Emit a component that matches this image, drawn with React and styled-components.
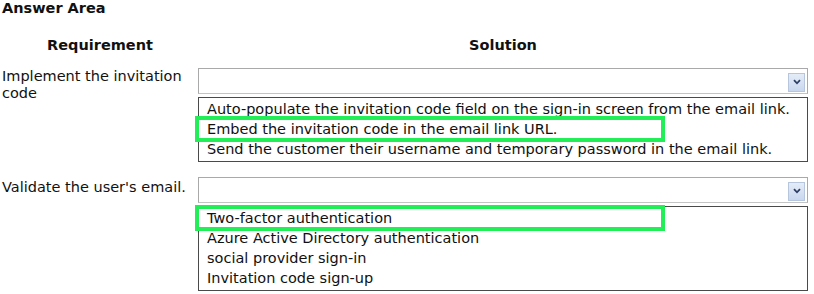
import React from "react";
import styled, { createGlobalStyle } from "styled-components";

const Global = createGlobalStyle`
  html, body { margin: 0; padding: 0; background: #fff; }
  body { font-family: "DejaVu Sans", Tahoma, Verdana, sans-serif; color: #111; }
`;

const Page = styled.div`
  width: 814px;
  height: 294px;
  padding: 0 0 0 2px;
  box-sizing: border-box;
  overflow: hidden;
`;

const Title = styled.div`
  font-weight: bold;
  font-size: 14.5px;
  line-height: 16px;
`;

const Grid = styled.div`
  display: grid;
  grid-template-columns: 196px 610px;
`;

const Header = styled.div`
  font-weight: bold;
  font-size: 14.5px;
  text-align: center;
  line-height: 16px;
  padding-top: 21px;
  padding-bottom: 15px;
  padding-right: ${(p) => p.$shift || 0}px;
`;

const Label = styled.div`
  font-size: 14.5px;
  line-height: 17px;
  padding-top: ${(p) => p.$top}px;
  padding-right: 2px;
`;

const Field = styled.div`
  display: flex;
  flex-direction: column;
  padding-top: ${(p) => p.$top}px;
  gap: 3px;
`;

const Select = styled.div`
  height: 26px;
  border: 1px solid #a9a9a9;
  border-bottom-color: #c4c4c4;
  box-sizing: border-box;
  display: flex;
  align-items: center;
  justify-content: flex-end;
  padding-right: 2px;
`;

const ArrowBtn = styled.div`
  width: 15px;
  height: 17px;
  border: 1px solid #b7c6dc;
  background: linear-gradient(#e4ecf8, #c9d7ee);
  display: flex;
  align-items: center;
  justify-content: center;
  margin-top: 2px;
`;

const List = styled.div`
  border: 1px solid #4a4a4a;
  box-sizing: border-box;
  padding: 1px 0 2px 8px;
`;

const Item = styled.div`
  position: relative;
  font-size: 14.5px;
  line-height: 20px;
  white-space: nowrap;
  &::after {
    content: "";
    display: ${(p) => (p.$hl ? "block" : "none")};
    position: absolute;
    left: -12px;
    top: -3px;
    width: 470px;
    height: 26px;
    box-sizing: border-box;
    border: 4px solid #22ee58;
  }
`;

const Arrow = () => (
  <ArrowBtn>
    <svg width="8" height="6" viewBox="0 0 8 6">
      <path d="M1 1.2 L4 4.3 L7 1.2" fill="none" stroke="#2c3e66" strokeWidth="1.8" />
    </svg>
  </ArrowBtn>
);

export default function App() {
  return (
    <Page>
      <Global />
      <Title>Answer Area</Title>
      <Grid>
        <Header>Requirement</Header>
        <Header $shift={-10}>Solution</Header>

        <Label $top={0}>Implement the invitation code</Label>
        <Field $top={0}>
          <Select>
            <Arrow />
          </Select>
          <List>
            <Item>Auto-populate the invitation code field on the sign-in screen from the email link.</Item>
            <Item $hl>Embed the invitation code in the email link URL.</Item>
            <Item>Send the customer their username and temporary password in the email link.</Item>
          </List>
        </Field>

        <Label $top={17}>Validate the user's email.</Label>
        <Field $top={15}>
          <Select>
            <Arrow />
          </Select>
          <List>
            <Item $hl>Two-factor authentication</Item>
            <Item>Azure Active Directory authentication</Item>
            <Item>social provider sign-in</Item>
            <Item>Invitation code sign-up</Item>
          </List>
        </Field>
      </Grid>
    </Page>
  );
}
